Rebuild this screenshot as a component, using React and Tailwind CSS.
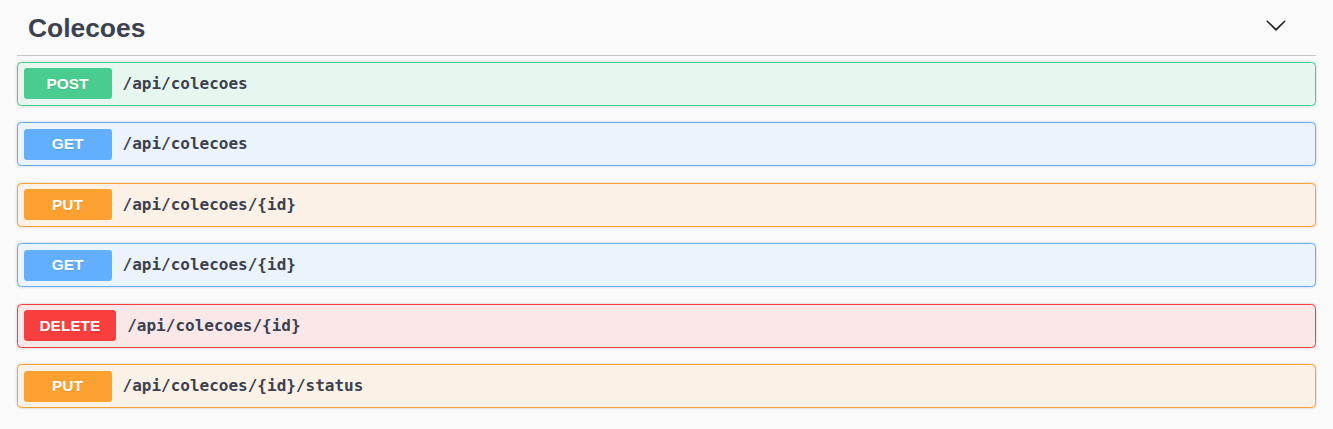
import React from "react";

const ops = [
  { m: "POST", path: "/api/colecoes", box: "border-[#49cc90] bg-[#e8f6f0]", badge: "bg-[#49cc90]" },
  { m: "GET", path: "/api/colecoes", box: "border-[#61affe] bg-[#ebf3fb]", badge: "bg-[#61affe]" },
  { m: "PUT", path: "/api/colecoes/{id}", box: "border-[#fca130] bg-[#fbf1e6]", badge: "bg-[#fca130]" },
  { m: "GET", path: "/api/colecoes/{id}", box: "border-[#61affe] bg-[#ebf3fb]", badge: "bg-[#61affe]" },
  { m: "DELETE", path: "/api/colecoes/{id}", box: "border-[#f93e3e] bg-[#fae7e7]", badge: "bg-[#f93e3e]" },
  { m: "PUT", path: "/api/colecoes/{id}/status", box: "border-[#fca130] bg-[#fbf1e6]", badge: "bg-[#fca130]" },
];

export default function App() {
  return (
    <div className="min-h-[429px] w-full bg-[#fafafa] px-[17px]" style={{ fontFamily: '"Liberation Sans", Arial, sans-serif' }}>
      <div className="flex h-[56px] items-start justify-between border-b border-b-[#c6c6c6] pl-[11px] pr-[29px]">
        <h3 className="pt-[12.5px] text-[26.4px] font-bold leading-[30.4px] text-[#3b4151]">Colecoes</h3>
        <svg className="mt-[14px]" width="22" height="22" viewBox="0 0 20 20" fill="#222">
          <path d="M17.418 6.109c.272-.268.709-.268.979 0s.219.708 0 .979l-7.908 7.83c-.27.268-.707.268-.979 0l-7.908-7.83c-.27-.271-.27-.711 0-.979.27-.268.709-.268.979 0L10 13.25l7.418-7.141z" />
        </svg>
      </div>
      <div className="mt-[5.5px] flex flex-col gap-[16.5px]">
        {ops.map((o, i) => (
          <div
            key={i}
            className={`flex h-[44px] items-center rounded-[4.4px] border px-[5.5px] shadow-[0_0_3px_rgba(0,0,0,0.19)] ${o.box}`}
          >
            <span
              className={`flex h-[31px] min-w-[88px] items-center justify-center rounded-[3.3px] px-[16px] text-[15.4px] font-bold text-white [text-shadow:0_1px_0_rgba(0,0,0,0.1)] ${o.badge}`}
            >
              {o.m}
            </span>
            <span
              className="px-[11px] text-[16px] font-bold text-[#3b4151]"
              style={{ fontFamily: '"DejaVu Sans Mono", monospace' }}
            >
              {o.path}
            </span>
          </div>
        ))}
      </div>
    </div>
  );
}
